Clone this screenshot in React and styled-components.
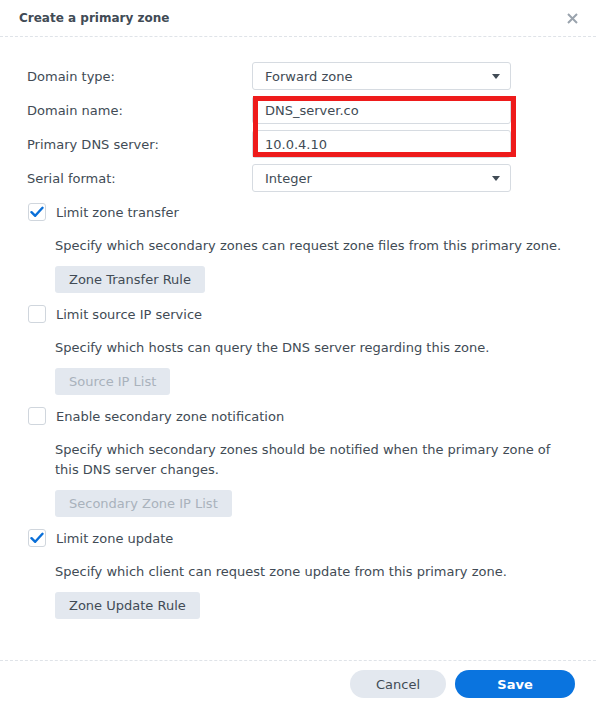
import styled, { createGlobalStyle } from 'styled-components';

const GlobalStyle = createGlobalStyle`
  html, body {
    margin: 0;
    padding: 0;
    background: #fff;
  }
  body {
    font-family: 'DejaVu Sans', Verdana, sans-serif;
    font-size: 13px;
    color: #414b55;
  }
`;

const Dialog = styled.div`
  width: 596px;
  height: 706px;
  display: flex;
  flex-direction: column;
  background: #fff;
  box-sizing: border-box;
`;

const Header = styled.div`
  height: 37px;
  display: flex;
  align-items: center;
  justify-content: space-between;
  padding: 0 19px;
  border-bottom: 1px dashed #dfe3e8;
  box-sizing: border-box;
`;

const Title = styled.div`
  font-weight: bold;
  font-size: 12px;
  color: #414b55;
`;

const CloseBtn = styled.div`
  width: 14px;
  height: 14px;
  display: flex;
  align-items: center;
  justify-content: center;
  margin-right: -2px;
  cursor: pointer;
`;

const Body = styled.div`
  flex: 1;
  padding: 25px 27px 0 27px;
`;

const Form = styled.div`
  display: grid;
  grid-template-columns: 225px 259px;
  row-gap: 6px;
`;

const Label = styled.div`
  height: 28px;
  display: flex;
  align-items: center;
`;

const Field = styled.div`
  height: 28px;
  box-sizing: border-box;
  border: 1px solid #d6dbe1;
  border-radius: 3px;
  display: flex;
  align-items: center;
  justify-content: space-between;
  padding: 0 10px 0 12px;
  color: #414b55;
`;

const Caret = styled.span`
  width: 0;
  height: 0;
  border-left: 4.5px solid transparent;
  border-right: 4.5px solid transparent;
  border-top: 5px solid #414b55;
`;

const FieldGroup = styled.div`
  grid-column: 2;
  grid-row: 2 / 4;
  display: flex;
  flex-direction: column;
  gap: 6px;
  position: relative;
`;

const Highlight = styled.div`
  position: absolute;
  left: 1px;
  top: 0;
  right: -5px;
  bottom: 1px;
  border: 5px solid #ee1b1b;
  pointer-events: none;
`;

const Section = styled.div`
  margin-top: ${(p) => (p.first ? '10px' : '11px')};
`;

const CheckRow = styled.label`
  display: flex;
  align-items: center;
  gap: 10px;
  height: 20px;
  margin-left: 1px;
`;

const Box = styled.span`
  width: 18px;
  height: 18px;
  box-sizing: border-box;
  border: 1px solid #d0d6dd;
  border-radius: 3px;
  display: flex;
  align-items: center;
  justify-content: center;
  background: #fff;
`;

const Desc = styled.div`
  margin: 14px 0 0 28px;
  line-height: 20px;
  max-width: 530px;
`;

const RuleButton = styled.div`
  display: inline-flex;
  align-items: center;
  height: 27px;
  padding: 0 14px;
  margin: 10px 0 0 28px;
  background: #e3e8ef;
  border-radius: 3px;
  color: ${(p) => (p.disabled ? '#a9b2bc' : '#414b55')};
`;

const Footer = styled.div`
  height: 46px;
  border-top: 1px dashed #dfe3e8;
  display: flex;
  justify-content: flex-end;
  align-items: flex-start;
  padding: 9px 21px 0 0;
  gap: 9px;
  box-sizing: border-box;
`;

const PillButton = styled.div`
  height: 28px;
  width: ${(p) => p.width}px;
  border-radius: 14px;
  display: flex;
  align-items: center;
  justify-content: center;
  background: ${(p) => (p.primary ? '#0a74df' : '#e3e8ef')};
  color: ${(p) => (p.primary ? '#fff' : '#414b55')};
  font-weight: ${(p) => (p.primary ? 'bold' : 'normal')};
`;

const Check = ({ checked }) => (
  <Box>
    {checked && (
      <svg width="14" height="12" viewBox="0 0 14 12">
        <path d="M1.5 6.2 L5.2 9.8 L12.5 1.8" fill="none" stroke="#0a6fd8" strokeWidth="2.4" strokeLinecap="round" strokeLinejoin="round" />
      </svg>
    )}
  </Box>
);

const sections = [
  {
    label: 'Limit zone transfer',
    checked: true,
    desc: 'Specify which secondary zones can request zone files from this primary zone.',
    button: 'Zone Transfer Rule',
  },
  {
    label: 'Limit source IP service',
    checked: false,
    desc: 'Specify which hosts can query the DNS server regarding this zone.',
    button: 'Source IP List',
    disabled: true,
  },
  {
    label: 'Enable secondary zone notification',
    checked: false,
    desc: 'Specify which secondary zones should be notified when the primary zone of this DNS server changes.',
    button: 'Secondary Zone IP List',
    disabled: true,
  },
  {
    label: 'Limit zone update',
    checked: true,
    desc: 'Specify which client can request zone update from this primary zone.',
    button: 'Zone Update Rule',
  },
];

export default function App() {
  return (
    <>
      <GlobalStyle />
      <Dialog>
        <Header>
          <Title>Create a primary zone</Title>
          <CloseBtn>
            <svg width="11" height="11" viewBox="0 0 11 11">
              <path d="M1 1 L10 10 M10 1 L1 10" stroke="#9aa3ad" strokeWidth="2" />
            </svg>
          </CloseBtn>
        </Header>
        <Body>
          <Form>
            <Label>Domain type:</Label>
            <Field>
              Forward zone
              <Caret />
            </Field>
            <Label>Domain name:</Label>
            <FieldGroup>
              <Field>DNS_server.co</Field>
              <Field>10.0.4.10</Field>
              <Highlight />
            </FieldGroup>
            <Label>Primary DNS server:</Label>
            <Label>Serial format:</Label>
            <Field>
              Integer
              <Caret />
            </Field>
          </Form>
          {sections.map((s, i) => (
            <Section key={s.label} first={i === 0}>
              <CheckRow>
                <Check checked={s.checked} />
                {s.label}
              </CheckRow>
              <Desc>{s.desc}</Desc>
              <RuleButton disabled={s.disabled}>{s.button}</RuleButton>
            </Section>
          ))}
        </Body>
        <Footer>
          <PillButton width={96}>Cancel</PillButton>
          <PillButton width={120} primary>
            Save
          </PillButton>
        </Footer>
      </Dialog>
    </>
  );
}
